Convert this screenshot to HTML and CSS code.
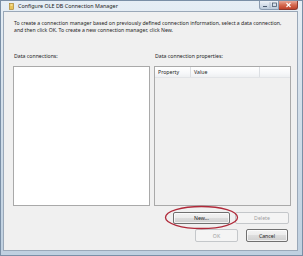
FILE: index.html
```html
<!DOCTYPE html>
<html lang="en">
<head>
    <meta charset="UTF-8">
    <meta name="viewport" content="width=device-width, initial-scale=1.0">
    <title>Configure OLE DB Connection Manager</title>
    <link rel="stylesheet" href="styles.css">
</head>
<body>
    <div class="window">
        <div class="titlebar">
            <svg class="app-icon" width="5" height="7" viewBox="0 0 5 7">
                <rect x="0.5" y="0.5" width="4" height="6" fill="#e8c45a" stroke="#a07a20" stroke-width="0.6"/>
                <rect x="1.5" y="1.5" width="2" height="1" fill="#fff6c8"/>
            </svg>
            <span class="title">Configure OLE DB Connection Manager</span>
            <div class="controls">
                <div class="ctl-minmax">
                    <svg width="20" height="8" viewBox="0 0 20 8">
                        <line x1="3" y1="5.5" x2="7" y2="5.5" stroke="#4a5a6e" stroke-width="1"/>
                        <line x1="10" y1="1" x2="10" y2="7" stroke="#9aa8b8" stroke-width="0.6"/>
                        <rect x="12.5" y="2" width="4" height="3.5" fill="none" stroke="#4a5a6e" stroke-width="0.8"/>
                    </svg>
                </div>
                <div class="ctl-close">
                    <svg width="19" height="8" viewBox="0 0 19 8">
                        <path d="M7.5 2 L11.5 6 M11.5 2 L7.5 6" stroke="#ffffff" stroke-width="1.1"/>
                    </svg>
                </div>
            </div>
        </div>

        <div class="client">
            <p class="desc">To create a connection manager based on previously defined connection information, select a data connection, and then click OK. To create a new connection manager, click New.</p>

            <div class="panes">
                <div class="pane">
                    <div class="label">Data connections:</div>
                    <div class="listbox"></div>
                </div>
                <div class="pane">
                    <div class="label">Data connection properties:</div>
                    <div class="grid">
                        <div class="grid-head">
                            <span class="col col-prop">Property</span>
                            <span class="col col-val">Value</span>
                            <span class="col col-rest"></span>
                        </div>
                    </div>
                </div>
            </div>

            <div class="btn-row first">
                <div class="new-wrap">
                    <button class="btn btn-new">New...</button>
                    <!-- red highlight drawn over the New button -->
                    <svg class="highlight" width="75" height="25" viewBox="0 0 75 25">
                        <ellipse cx="37.5" cy="12.5" rx="36" ry="11" fill="none" stroke="#b02a3a" stroke-width="1.3"/>
                    </svg>
                </div>
                <button class="btn btn-delete" disabled>Delete</button>
            </div>
            <div class="btn-row second">
                <button class="btn btn-ok" disabled>OK</button>
                <button class="btn btn-cancel">Cancel</button>
            </div>
        </div>
    </div>
</body>
</html>
```

FILE: styles.css
```css
body {
    margin: 0;
    font-family: "Noto Sans", "Open Sans", sans-serif;
    background: #ffffff;
}

.window {
    width: 303px;
    height: 256px;
    box-sizing: border-box;
    display: flex;
    flex-direction: column;
    background: linear-gradient(to bottom, #e6eef5 0%, #d3dfea 40%, #bfd0e0 100%);
    border: 1px solid #7a8fa6;
    padding: 0 4px 4px 2px;
}

.titlebar {
    height: 10px;
    display: flex;
    align-items: center;
    position: relative;
}

.app-icon {
    margin-left: 6px;
    margin-right: 4px;
}

.title {
    font-size: 5.4px;
    color: #1c1c1c;
    line-height: 7px;
}

.controls {
    margin-left: auto;
    margin-right: 0;
    display: flex;
    align-self: flex-start;
}

.controls svg {
    display: block;
}

.ctl-minmax {
    width: 20px;
    height: 9px;
    box-sizing: border-box;
    border: 1px solid #8a9bb0;
    border-top: none;
    border-radius: 0 0 0 3px;
    background: linear-gradient(to bottom, #eef3f8 0%, #d4dee9 50%, #bccbdb 100%);
}

.ctl-close {
    width: 19px;
    height: 9px;
    box-sizing: border-box;
    border: 1px solid #8c3a30;
    border-top: none;
    border-left: none;
    border-radius: 0 0 3px 0;
    background: linear-gradient(to bottom, #eaa999 0%, #d4694f 50%, #c0422a 100%);
}

.client {
    flex: 1;
    background: #f0f0f0;
    border: 1px solid #9aa8b8;
    padding: 8px 6px 7px 9px;
    display: flex;
    flex-direction: column;
}

.desc {
    margin: 0 0 0 1px;
    font-size: 5.15px;
    line-height: 7px;
    color: #1e1e1e;
}

.panes {
    display: grid;
    grid-template-columns: 137px 137px;
    column-gap: 4px;
    margin-top: 19px;
}

.label {
    font-size: 5.2px;
    line-height: 7px;
    color: #1e1e1e;
    margin: 0 0 6px 1px;
}

.listbox {
    height: 140px;
    box-sizing: border-box;
    border: 1px solid #a9a9a9;
    background: #ffffff;
}

.grid {
    height: 140px;
    box-sizing: border-box;
    border: 1px solid #a9a9a9;
    background: #f0f0f0;
}

.grid-head {
    display: flex;
    height: 10px;
    background: linear-gradient(to bottom, #ffffff 0%, #f7f8fa 60%, #eef0f2 100%);
    border-bottom: 1px solid #e2e4e7;
}

.col {
    font-size: 5.2px;
    line-height: 10px;
    color: #1e1e1e;
    padding-left: 3px;
    border-right: 1px solid #dcdfe3;
    box-sizing: border-box;
}

.col-prop { width: 36px; }
.col-val { width: 69px; }
.col-rest { flex: 1; border-right: none; }

.btn-row {
    display: flex;
    justify-content: flex-end;
}

.btn-row.first {
    margin-top: 6px;
    gap: 5px;
    margin-right: 2px;
}

.btn-row.second {
    margin-top: 5px;
    gap: 8px;
    margin-right: 3px;
}

.btn {
    display: block;
    font-family: "Noto Sans", "Open Sans", sans-serif;
    font-size: 5.2px;
    padding: 0;
    color: #1e1e1e;
    border: 1px solid #707070;
    border-radius: 2px;
    background: linear-gradient(to bottom, #f3f3f3 0%, #ebebeb 49%, #dddddd 50%, #cfcfcf 100%);
    box-shadow: inset 0 0 0 1px rgba(255, 255, 255, 0.7);
}

.btn:disabled {
    color: #a0a0a0;
    border-color: #c4c7ca;
    background: #f4f4f4;
    box-shadow: none;
}

.new-wrap {
    position: relative;
    display: flex;
}

.btn-new { width: 57px; height: 12px; }
.btn-delete { width: 54px; height: 12px; }
.btn-ok { width: 43px; height: 13px; }
.btn-cancel { width: 42px; height: 13px; }

.highlight {
    position: absolute;
    left: -9px;
    top: -7px;
    pointer-events: none;
}
```
